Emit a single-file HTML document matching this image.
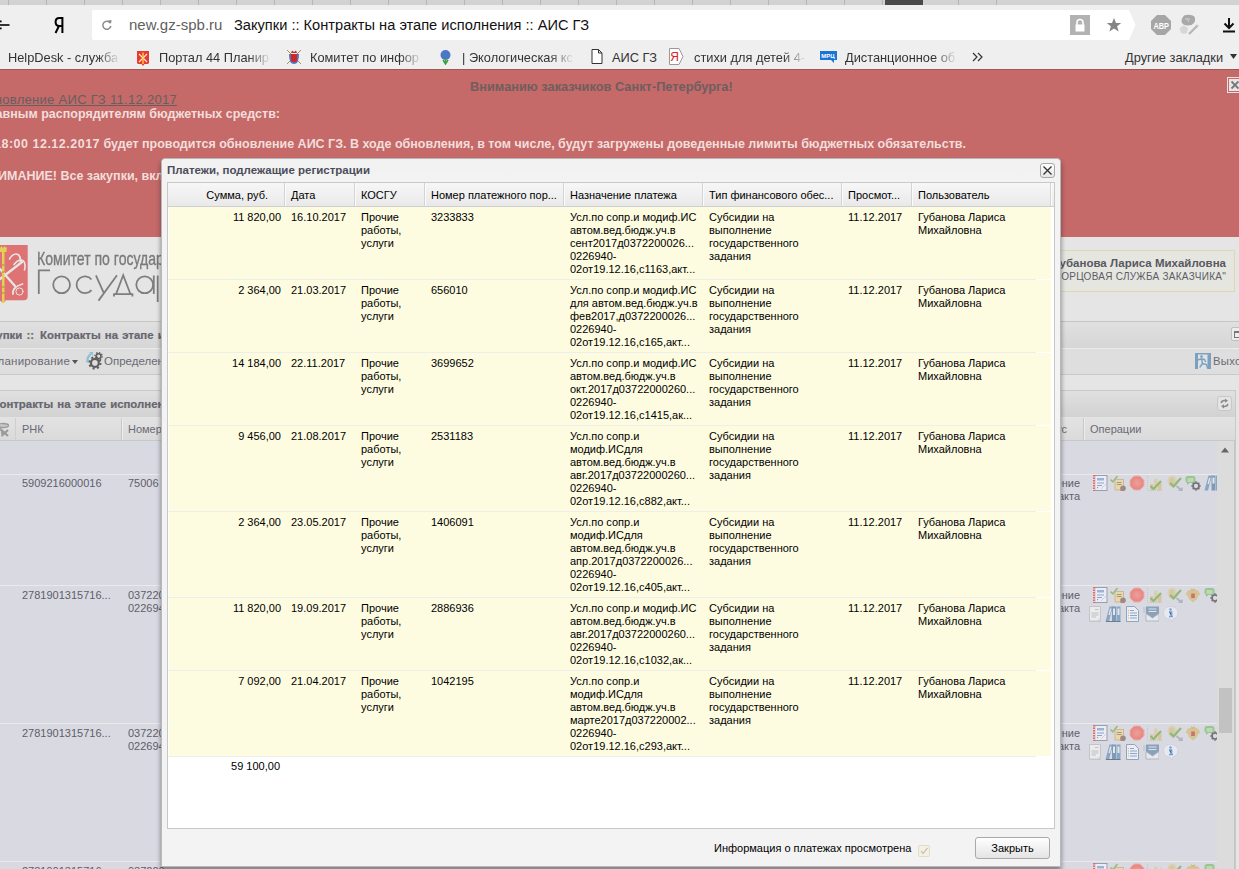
<!DOCTYPE html>
<html><head><meta charset="utf-8">
<style>
*{box-sizing:border-box}
html,body{margin:0;padding:0}
body{width:1239px;height:869px;overflow:hidden;position:relative;font-family:"Liberation Sans",sans-serif;background:#e5e5e5}
.a{position:absolute}
.nw{white-space:nowrap}
.bm{font-size:12.8px;line-height:16px;color:#333;top:50px}
.bt{font-size:12.5px;line-height:14px;font-weight:bold;color:#f3dedb}
.bgt{font-size:11px;line-height:13px;color:#5e5e68}
.hdt{font-size:11px;line-height:13px;color:#000}
.tb{font-size:11.4px;line-height:14px;font-weight:bold;color:#66666e;word-spacing:1px;-webkit-text-stroke:0.2px #66666e}
.cl{font-size:11px;line-height:13px;color:#000}
</style></head><body>
<svg width="0" height="0" style="position:absolute">
<defs>
<radialGradient id="gst" cx="0.5" cy="0.5" r="0.6"><stop offset="0" stop-color="#f58a7c"/><stop offset="0.7" stop-color="#ec6a60"/><stop offset="1" stop-color="#f0a8a0"/></radialGradient>
<g id="i1"><rect x="2.5" y="0.5" width="12.5" height="15" fill="#f6f6f8" stroke="#7a8aa0" stroke-width="1"/><rect x="1" y="0" width="2.2" height="16" fill="#d84848"/><path d="M0.5 2 H3 M0.5 4.5 H3 M0.5 7 H3 M0.5 9.5 H3 M0.5 12 H3 M0.5 14.5 H3" stroke="#f4f4f4" stroke-width="0.8"/><rect x="5" y="3" width="7" height="2.5" fill="#7ea6dc"/><path d="M5 8 H12 M5 10.5 H10" stroke="#6890cc" stroke-width="1"/><path d="M9 14 L14 9" stroke="#c0c4cc" stroke-width="0.8"/><rect x="5" y="12" width="1.2" height="1.2" fill="#6890cc"/></g>
<g id="i2"><path d="M0.5 4.5 L2.8 6.8 L7.5 1" stroke="#7cb45c" stroke-width="1.7" fill="none"/><rect x="5" y="4.5" width="8.5" height="10.5" fill="#ecd898" stroke="#c0a068" stroke-width="0.8"/><path d="M6.8 7.5 H11.5 M6.8 9.5 H11.5" stroke="#8a7050" stroke-width="0.9"/><circle cx="13" cy="13.2" r="2.8" fill="#8a6c5c"/><path d="M10 15.5 L11 16 L12 15.5" stroke="#c05050" stroke-width="0.8" fill="none"/></g>
<g id="i3"><path d="M5 0.8 H11 L15.2 5 V11 L11 15.2 H5 L0.8 11 V5 Z" fill="url(#gst)" stroke="#f0b0a8" stroke-width="0.8"/></g>
<g id="i4"><path d="M0.5 1 V15.5 H16" stroke="#b8b8b8" stroke-width="0.8" stroke-dasharray="1 1" fill="none"/><rect x="3" y="9" width="3.5" height="6.5" rx="1" fill="#d8c48c"/><rect x="7" y="3.5" width="3.5" height="12" rx="1" fill="#dccb98"/><rect x="11" y="7" width="3.5" height="8.5" rx="1" fill="#d4c088"/><path d="M3.5 11 L6.5 14 L14 6" stroke="#74ac54" stroke-width="2" fill="none"/></g>
<g id="i5"><ellipse cx="5.5" cy="6.5" rx="4.8" ry="6" fill="#dacea0" transform="rotate(-15 5.5 6.5)"/><ellipse cx="5" cy="6.5" rx="2.5" ry="4" fill="#cfc290" transform="rotate(-15 5 6.5)"/><path d="M3 8 L6.5 11.5 L14 3" stroke="#74ac54" stroke-width="2.2" fill="none"/><path d="M9.5 11 L14.5 15.5 M11.5 15.8 H14.8 V12.5" stroke="#a0a6ac" stroke-width="1.8" fill="none"/></g>
<g id="i6"><path d="M8 3 C5 2 1.5 3 0.8 8 C2.5 7.5 3 9.5 4 12 L8 15.5 L12 12 C13 9.5 13.5 7.5 15.2 8 C14.5 3 11 2 8 3 Z" fill="#d6bc78"/><rect x="6.2" y="6.5" width="3.6" height="4.5" fill="#c84a48"/><path d="M6 1 L8 2.5 L10 1 L9.5 3.5 H6.5 Z" fill="#caa858"/></g>
<g id="i7"><path d="M0.5 3.5 Q0.5 1 3 1 H8 Q10.5 1 10.5 3.5 V5.5 Q10.5 8 8 8 H4.5 L2 10 V7.8 Q0.5 7.5 0.5 5.5 Z" fill="#80c070"/><path d="M2.5 4 H8.5 M2.5 6 H8.5" stroke="#eef6e8" stroke-width="0.9"/><circle cx="11" cy="11" r="3" stroke="#4a4a4a" stroke-width="1.7" fill="none"/><path d="M11 6.3 V7.8 M11 14.2 V15.7 M6.3 11 H7.8 M14.2 11 H15.7 M7.7 7.7 L8.7 8.7 M13.3 13.3 L14.3 14.3 M7.7 14.3 L8.7 13.3 M13.3 8.7 L14.3 7.7" stroke="#4a4a4a" stroke-width="1.5"/></g>
<g id="i8"><path d="M0.5 15.5 L4.5 0.5 H8 L4 15.5 Z" fill="#6a94b8"/><rect x="7.5" y="0.5" width="4" height="15" fill="#5a84a8"/><rect x="12" y="0.5" width="4" height="15" fill="#6a94b8"/><path d="M5 3 L6.5 3 L5 9 L3.5 9 Z" fill="#e8ecf0"/><rect x="8.5" y="2.5" width="2" height="6" fill="#e8ecf0"/><rect x="13" y="2.5" width="2" height="6" fill="#e8ecf0"/></g>
<g id="i9"><path d="M0.5 0.5 H11.5 V15.5 H0.5 Z" fill="#f2f2f2" stroke="#bcbcbc"/><path d="M6 3.5 H9.5 M2.5 7 H9.5 M2.5 9 H9.5 M2.5 11 H7" stroke="#a8a8a8" stroke-width="0.8"/><rect x="1" y="14.5" width="11" height="1.5" fill="#c0c0c0"/><path d="M8 15 L11.5 11.5 V15 Z" fill="#d0d0d0"/></g>
<g id="i10"><path d="M0.5 15.5 L4.5 0.5 H8 L4 15.5 Z" fill="#6a94b8"/><rect x="7" y="0.5" width="4" height="15" fill="#5a84a8"/><rect x="11.5" y="0.5" width="4" height="15" fill="#6a94b8"/><path d="M5 2.5 L6.5 2.5 L5 9 L3.5 9 Z" fill="#e8ecf0"/><rect x="8" y="2.5" width="2" height="6.5" fill="#e8ecf0"/><rect x="12.5" y="2.5" width="2" height="6.5" fill="#e8ecf0"/><path d="M1 15.5 H15.5" stroke="#3e5a74" stroke-width="1"/></g>
<g id="i11"><path d="M0.5 0.5 H8.5 L12.5 4.5 V15.5 H0.5 Z" fill="#f6f6f8" stroke="#6e94b4"/><path d="M4 4.5 H8 M4 7 H11 M4 9.5 H11 M4 12 H11" stroke="#6e94c4" stroke-width="1"/><path d="M2 4.5 H3 M2 7 H3 M2 9.5 H3 M2 12 H3" stroke="#e0a050" stroke-width="1"/></g>
<g id="i12"><path d="M3 0.5 H16 V14 H3 Z" fill="#6e8eac"/><path d="M3 7.5 L9.5 12 L16 7.5 V15 H3 Z" fill="#eef0f2" stroke="#90a0a8" stroke-width="0.8"/><path d="M5.5 3 H13.5 M5.5 5.5 H13.5" stroke="#e0e8f0" stroke-width="1.1"/><path d="M0 2 H2.5 M0 4 H2.5 M0 6 H2.5" stroke="#a0b0c0" stroke-width="0.8"/></g>
<g id="i13"><path d="M7.5 0.5 C12 0.5 15 3 15 7 C15 10 13 12 10 13 L9 16 L7 13 C3 13 0.5 10.5 0.5 7 C0.5 3 3.5 0.5 7.5 0.5 Z" fill="#eeeef6" stroke="#c8c8d8" stroke-width="0.8"/><circle cx="7.5" cy="3.5" r="1.2" fill="#4a8ad0"/><path d="M6 6 H8.5 V10.5 M6 10.5 H10" stroke="#4a8ad0" stroke-width="1.7"/></g>
</defs></svg>

<!-- CHROME -->
<div class="a" style="left:0;top:0;width:1239px;height:5px;background:#d2d2d2"></div>
<div class="a" id="tabsep" style="left:0;top:0;width:1000px;height:5px;background:repeating-linear-gradient(90deg,transparent 0,transparent 8px,#b4b4b4 8px,#b4b4b4 9px,transparent 9px,transparent 38px);background-size:38px 5px"></div>
<div class="a" style="left:885px;top:0;width:38px;height:5px;background:#4a4a4a"></div>
<div class="a" style="left:0;top:5px;width:1239px;height:64px;background:#efefef"></div>
<!-- back arrow -->
<svg class="a" style="left:0;top:19px" width="12" height="12" viewBox="0 0 12 12"><path d="M0 6 H9.5" stroke="#000" stroke-width="1.6"/><path d="M-1 1 L-5 6 L-1 11" stroke="#000" stroke-width="1.6" fill="none"/><rect x="0" y="1.5" width="1.6" height="1.8" fill="#000"/><rect x="0" y="8.5" width="1.6" height="1.8" fill="#000"/></svg>
<!-- Ya -->
<svg class="a" style="left:54px;top:16px" width="11" height="18" viewBox="0 0 11 18"><rect x="7.4" y="1" width="2" height="16" fill="#000"/><path d="M8.5 2 H5.3 Q1.6 2 1.6 6 Q1.6 10 5.3 10 H8.5" stroke="#000" stroke-width="2" fill="none"/><path d="M5 10 L1.5 17" stroke="#000" stroke-width="2"/></svg>
<!-- address -->
<div class="a" style="left:92px;top:10px;width:1037px;height:30px;background:#fff;border-radius:2px 0 0 2px"></div>
<svg class="a" style="left:1128px;top:10px" width="8" height="30" viewBox="0 0 8 30"><path d="M0 0 L1 0 L7.5 15 L1 30 L0 30 Z" fill="#fff"/></svg>
<svg class="a" style="left:101px;top:19px" width="12" height="12" viewBox="0 0 12 12"><path d="M9.3 4.2 A4 4 0 1 0 9.8 7" stroke="#8a8a8a" stroke-width="1.5" fill="none"/><path d="M7 1.5 L10.5 1 L10 4.8 Z" fill="#8a8a8a"/></svg>
<div class="a nw" style="left:129px;top:16px;font-size:15px;line-height:18px;color:#5f5f5f">new.gz-spb.ru</div>
<div class="a nw" style="left:234px;top:16px;font-size:14.63px;line-height:18px;color:#111">Закупки :: Контракты на этапе исполнения :: АИС ГЗ</div>
<!-- lock -->
<div class="a" style="left:1070px;top:15px;width:20px;height:20px;background:#b2b2b2"></div>
<svg class="a" style="left:1070px;top:15px" width="20" height="20" viewBox="0 0 20 20"><path d="M7 10 V7.5 A3 3 0 0 1 13 7.5 V10" stroke="#fff" stroke-width="1.6" fill="none"/><rect x="5.5" y="9.5" width="9" height="7" fill="#fff"/></svg>
<!-- star -->
<svg class="a" style="left:1106px;top:17px" width="16" height="16" viewBox="0 0 16 16"><path d="M8 1 L10 6 L15.2 6.1 L11.1 9.3 L12.6 14.5 L8 11.5 L3.4 14.5 L4.9 9.3 L0.8 6.1 L6 6 Z" fill="#858585"/></svg>
<!-- ABP -->
<svg class="a" style="left:1151px;top:15px" width="20" height="20" viewBox="0 0 20 20"><path d="M6 0 H14 L20 6 V14 L14 20 H6 L0 14 V6 Z" fill="#a6a6a6"/><text x="2.5" y="14" font-family="Liberation Sans" font-weight="bold" font-size="9.5" fill="#fff" textLength="15.5" lengthAdjust="spacingAndGlyphs">ABP</text></svg>
<!-- extension 2 -->
<svg class="a" style="left:1178px;top:14px" width="24" height="22" viewBox="0 0 24 22"><path d="M5 3 Q6 0.8 10 0.8 Q16 0.8 17 4 Q17.5 7 16 9 Q14 11.5 10 11.5 Q5 11.5 3.5 8 Q3 5 5 3 Z" fill="#a9a9a9"/><path d="M7 5 H12 M9 5 L11 8" stroke="#d0d0d0" stroke-width="1"/><path d="M1.5 15 L5 11.5 Q8 12 10 14 L9 19 Q6 20.5 3 19 Z" fill="#d6d6d6"/><path d="M11 20 L20 11" stroke="#b8b8b8" stroke-width="2.4"/><path d="M19 10 L21 12" stroke="#e4e4e4" stroke-width="1.5"/></svg>
<!-- download -->
<svg class="a" style="left:1222px;top:17px" width="14" height="16" viewBox="0 0 14 16"><path d="M7 1 V10" stroke="#111" stroke-width="2"/><path d="M2.5 6.5 L7 11 L11.5 6.5" stroke="#111" stroke-width="2" fill="none"/><rect x="1" y="13.5" width="12" height="2" fill="#111"/></svg>
<!-- bookmarks -->
<div class="a nw bm" style="left:8px;width:112px;overflow:hidden;-webkit-mask-image:linear-gradient(90deg,#000 80%,transparent)">HelpDesk - служба</div>
<svg class="a" style="left:137px;top:51px" width="12" height="15" viewBox="0 0 12 15"><path d="M0 0 H12 V11.5 Q12 13 10 13 H7.5 L6 15 L4.5 13 H2 Q0 13 0 11.5 Z" fill="#e8392c"/><path d="M2 3 L10 11 M10 3 L2 11" stroke="#fbe8e0" stroke-width="1.2"/><path d="M6 1.5 V13" stroke="#f6d040" stroke-width="1.4"/></svg>
<div class="a nw bm" style="left:159px;width:112px;overflow:hidden;-webkit-mask-image:linear-gradient(90deg,#000 80%,transparent)">Портал 44 Планир</div>
<svg class="a" style="left:286px;top:49px" width="16" height="16" viewBox="0 0 16 16"><path d="M1 1 L15 15 M15 1 L1 15" stroke="#b09040" stroke-width="1"/><path d="M3 5 Q3 15 8 15 Q13 15 13 5 Z" fill="#4a78c0"/><path d="M5 5 H11 V11 Q11 13 8 13 Q5 13 5 11 Z" fill="#d02828"/><path d="M5 4 L6 1.5 L8 3 L10 1.5 L11 4 Z" fill="#c03030"/></svg>
<div class="a nw bm" style="left:310px;width:112px;overflow:hidden;-webkit-mask-image:linear-gradient(90deg,#000 80%,transparent)">Комитет по инфор</div>
<svg class="a" style="left:439px;top:49px" width="13" height="16" viewBox="0 0 13 16"><circle cx="6.5" cy="6" r="5" fill="#4a78c8"/><path d="M4 11 L6.5 15 L9 11 M6.5 9 V15" stroke="#3aa040" stroke-width="1.5" fill="none"/></svg>
<div class="a nw bm" style="left:462px;width:112px;overflow:hidden;-webkit-mask-image:linear-gradient(90deg,#000 78%,transparent)">| Экологическая кс</div>
<svg class="a" style="left:591px;top:49px" width="12" height="15" viewBox="0 0 12 15"><path d="M1 0.5 H7.5 L11 4 V14.5 H1 Z M7.5 0.5 V4 H11" stroke="#333" stroke-width="1" fill="#fff"/></svg>
<div class="a nw bm" style="left:612px">АИС ГЗ</div>
<svg class="a" style="left:669px;top:48px" width="15" height="17" viewBox="0 0 15 17"><path d="M0.5 0.5 H10 L14 8.5 L10 16.5 H0.5 Z" stroke="#999" stroke-width="1" fill="#fff"/><text x="5.5" y="13" font-family="Liberation Sans" font-size="12" fill="#d22" text-anchor="middle">Я</text></svg>
<div class="a nw bm" style="left:694px;width:112px;overflow:hidden;-webkit-mask-image:linear-gradient(90deg,#000 80%,transparent)">стихи для детей 4-5</div>
<svg class="a" style="left:820px;top:51px" width="17" height="12" viewBox="0 0 17 12"><path d="M0 0 H17 V9 H14 V12 L11 9 H0 Z" fill="#1a74d8"/><text x="8" y="7" font-family="Liberation Sans" font-weight="bold" font-size="6" fill="#fff" text-anchor="middle">МРЦ</text></svg>
<div class="a nw bm" style="left:845px;width:112px;overflow:hidden;-webkit-mask-image:linear-gradient(90deg,#000 80%,transparent)">Дистанционное об</div>
<svg class="a" style="left:972px;top:52px" width="11" height="10" viewBox="0 0 11 10"><path d="M1 1 L5 5 L1 9 M6 1 L10 5 L6 9" stroke="#333" stroke-width="1.2" fill="none"/></svg>
<div class="a nw bm" style="left:1125px">Другие закладки</div>
<svg class="a" style="left:1230px;top:54px" width="7" height="5" viewBox="0 0 7 5"><path d="M0 0 H7 L3.5 5 Z" fill="#333"/></svg>
<div class="a" style="left:0;top:69px;width:1239px;height:1px;background:#9c6060"></div>

<!-- PAGE BACKGROUND -->
<div class="a" style="left:0;top:70px;width:1239px;height:799px;background:#e5e5e5"></div>
<!-- banner -->
<div class="a" style="left:0;top:69px;width:1239px;height:1px;background:#a25656"></div>
<div class="a" style="left:0;top:70px;width:1239px;height:167px;background:#c56969"></div>
<div class="a nw" style="left:470px;top:80px;font-size:12.8px;line-height:14px;font-weight:bold;color:#6e5e5e">Вниманию заказчиков Санкт-Петербурга!</div>
<div class="a nw bt" style="right:1062px;top:93px;color:#656060;text-decoration:underline;font-weight:normal;font-size:13px;letter-spacing:0.3px">Обновление АИС ГЗ 11.12.2017</div>
<div class="a nw bt" style="right:959px;top:107px">Главным распорядителям бюджетных средств:</div>
<div class="a nw bt" style="right:273px;top:137px">В <span style="letter-spacing:.5px">18:00 12.12.2017</span> будет проводится обновление АИС ГЗ. В ходе обновления, в том числе, будут загружены доведенные лимиты бюджетных обязательств.</div>
<div class="a nw bt" style="left:-20px;top:169px">ВНИМАНИЕ! Все закупки, включая</div>
<div class="a" style="left:1227px;top:77px;width:14px;height:16px;border:1px solid #e4e4e4;background:#c56969"></div>
<div class="a" style="left:1229px;top:79px;width:12px;height:12px;background:#e6e6e6"></div>
<svg class="a" style="left:1230px;top:80px" width="10" height="10" viewBox="0 0 10 10"><path d="M1.5 1.5 L8.5 8.5 M8.5 1.5 L1.5 8.5" stroke="#777" stroke-width="1.8"/></svg>
<!-- header with logo -->
<svg class="a" style="left:0;top:245px" width="29" height="60" viewBox="0 0 29 60">
<path d="M0 0 H27.7 V51.5 Q27.7 55.2 24 55.2 H6 L3 58.3 L0 55.5 Z" fill="#df7272"/>
<g stroke="#e6e6e6" fill="none" stroke-linecap="round">
<path d="M0 34 L22 17" stroke-width="2.3"/>
<path d="M9.5 14 Q13.5 7.5 18 9.5 Q21 11.5 20.5 17" stroke-width="1.6"/>
<path d="M14 19.5 Q19 13 23.5 16 Q26 19 24.5 25" stroke-width="1.6"/>
<path d="M0 24 L15 41" stroke-width="2.3"/>
<path d="M13 49 Q12 42 22.5 39" stroke-width="1.8"/>
<circle cx="19.5" cy="46.5" r="3.6" stroke-width="1"/>
</g>
<rect x="2" y="7" width="2.5" height="51" fill="#e4d058"/>
<path d="M0 3 L1.5 1 L3 3 L4.5 1 L6 3 L7 1.5 L6.5 7 L0 7 Z" fill="#e4d058"/>
<path d="M2 20 H4.5 M2 27 H4.5 M2 42 H4.5 M2 48 H4.5" stroke="#8a8040" stroke-width="0.8"/>
</svg>
<div class="a nw" style="left:37px;top:249px;font-size:18.5px;line-height:20px;color:#7a7a7a;transform:scaleX(0.76);-webkit-text-stroke:0.35px #7a7a7a;transform-origin:0 0">Комитет по государственному заказу</div>
<svg class="a" style="left:37px;top:268px" width="130" height="36" viewBox="0 0 130 36" fill="none" stroke="#7e7e7e" stroke-width="1.8">
<path d="M1.8 26 V2.3 H13"/>
<circle cx="24.6" cy="16.8" r="8.4"/>
<path d="M54.5 11.5 A8.4 8.4 0 1 0 54.5 22.1"/>
<path d="M58.9 7.3 L67 25.3 M80 7.3 L61.5 32.6"/>
<path d="M76.2 26.2 H96.2 M77 26 V28.5 M95.4 26 V28.5 M79 26.2 L86.2 7.3 L93.5 26.2"/>
<circle cx="107.7" cy="16.8" r="8.4"/><path d="M116.8 7.5 V26"/>
<path d="M120.7 7.5 V34"/></svg>
<!-- user box -->
<div class="a" style="left:1040px;top:250px;width:195px;height:42px;background:#e6e6e1;border:1px solid #ded8b0"></div>
<div class="a nw" style="right:13px;top:256px;font-size:11.5px;line-height:14px;font-weight:bold;color:#585860">Губанова Лариса Михайловна</div>
<div class="a nw" style="right:13px;top:270px;font-size:10px;line-height:14px;color:#5c5c64;letter-spacing:0.27px">"ДИРЕКЦИЯ ГИБДД ДВОРЦОВАЯ СЛУЖБА ЗАКАЗЧИКА"</div>
<!-- title bar 1 -->
<div class="a" style="left:0;top:321px;width:1239px;height:1px;background:#c6c6c6"></div>
<div class="a" style="left:0;top:322px;width:1239px;height:26px;background:linear-gradient(#e0e0e0,#d6d6d6)"></div>
<div class="a nw tb" style="right:1205px;top:328px;transform-origin:100% 0">Закупки ::</div><div class="a nw tb" style="left:40px;top:328px">Контракты на этапе исполнения</div>
<div class="a" style="left:1231px;top:327px;width:12px;height:14px;border:1px solid #c0c0c0;border-radius:2px;background:#ececec"></div>
<div class="a" style="left:1234px;top:331px;width:9px;height:7px;border:1px solid #777;border-top-width:2px"></div>
<!-- toolbar -->
<div class="a" style="left:0;top:348px;width:1239px;height:1px;background:#ececec"></div>
<div class="a" style="left:0;top:349px;width:1239px;height:25px;background:#dedede"></div>
<div class="a" style="left:0;top:374px;width:1239px;height:1px;background:#c9c9c9"></div>
<div class="a nw" style="right:1169px;top:355px;font-size:11.5px;line-height:13px;color:#6a6a74;letter-spacing:.2px">Планирование</div>
<svg class="a" style="left:72px;top:360px" width="6" height="4" viewBox="0 0 6 4"><path d="M0 0 H6 L3 4 Z" fill="#555"/></svg>
<svg class="a" style="left:84px;top:351px" width="20" height="20" viewBox="0 0 20 20"><path d="M3.2 11.5 Q3.2 5.5 6.8 3" stroke="#8ec0dc" stroke-width="2.2" fill="none"/><path d="M5.2 1 H9 V5 Z" fill="#8ec0dc"/>
<circle cx="10.9" cy="11.9" r="3.9" stroke="#5e5e5e" stroke-width="2.2" fill="none"/><circle cx="10.9" cy="11.9" r="5.6" stroke="#5e5e5e" stroke-width="2" stroke-dasharray="2.1 2.3" fill="none"/>
<circle cx="14.6" cy="5.2" r="2.4" stroke="#5e5e5e" stroke-width="1.5" fill="none"/><circle cx="14.6" cy="5.2" r="3.6" stroke="#5e5e5e" stroke-width="1.4" stroke-dasharray="1.4 1.4" fill="none"/></svg>
<div class="a nw" style="left:104px;top:355px;font-size:11.5px;line-height:13px;color:#6a6a74">Определение поставщика</div>
<svg class="a" style="left:1195px;top:353px" width="17" height="17" viewBox="0 0 17 17"><rect x="0" y="0" width="16" height="16" fill="#7ba0c0"/><rect x="3" y="1.5" width="11" height="14.5" fill="#dfe3e6"/><rect x="12.5" y="1.5" width="1.5" height="14.5" fill="#7ba0c0"/><circle cx="6.5" cy="3.6" r="1.3" fill="#7ba0c0"/><path d="M2.5 7 L6 6 L9.5 6.5 L10.5 8.5 M6.5 5.5 L7.5 10.5 M7.5 10.5 L5 14 M7.5 10.5 L11.5 11.5 L12.5 15" stroke="#7ba0c0" stroke-width="1.4" fill="none" stroke-linecap="round"/></svg>
<div class="a nw" style="left:1213px;top:355px;font-size:11.3px;line-height:13px;color:#6a6a74;letter-spacing:.3px">Выход</div>
<!-- grid panel -->
<div class="a" style="left:0;top:390px;width:1236px;height:1px;background:#c9c9c9"></div>
<div class="a" style="left:1235px;top:390px;width:1px;height:479px;background:#c9c9c9"></div>
<div class="a" style="left:0;top:391px;width:1235px;height:26px;background:linear-gradient(#e0e0e0,#d2d2d2)"></div>
<div class="a nw tb" style="left:-7.5px;top:397px">Контракты на этапе исполнения</div>
<div class="a" style="left:1217px;top:396px;width:15px;height:15px;border:1px solid #c8c8c8;border-radius:3px;background:#e4e4e4"></div>
<svg class="a" style="left:1219px;top:398px" width="11" height="11" viewBox="0 0 11 11"><path d="M2.2 5.2 Q2.5 2.3 6.5 2.6" stroke="#8a8a8a" stroke-width="1.5" fill="none"/><path d="M6 0.6 L9 2.8 L6 4.8 Z" fill="#8a8a8a"/><path d="M8.8 5.8 Q8.5 8.7 4.5 8.4" stroke="#8a8a8a" stroke-width="1.5" fill="none"/><path d="M5 6.2 L2 8.2 L5 10.4 Z" fill="#8a8a8a"/></svg>
<!-- grid header -->
<div class="a" style="left:0;top:417px;width:1235px;height:23px;background:linear-gradient(#e3e3e3,#dadada)"></div>
<div class="a" style="left:0;top:440px;width:1235px;height:1px;background:#c8c8c8"></div>
<div class="a" style="left:15px;top:418px;width:1px;height:22px;background:#cfcfcf"></div>
<div class="a" style="left:121px;top:418px;width:1px;height:22px;background:#c8c8c8"></div><div class="a" style="left:122px;top:418px;width:1px;height:22px;background:#ececec"></div>
<div class="a" style="left:1083px;top:418px;width:1px;height:22px;background:#c8c8c8"></div><div class="a" style="left:1084px;top:418px;width:1px;height:22px;background:#ececec"></div>
<svg class="a" style="left:0;top:421px" width="10" height="16" viewBox="0 0 10 16"><ellipse cx="3" cy="4.5" rx="5.5" ry="2" stroke="#9a9a9a" stroke-width="1.3" fill="#c8c8c8"/><path d="M-2 5.5 L2 10 V13" stroke="#a0a0a0" stroke-width="2" fill="none"/><path d="M1.5 9 L8 15 M8 9 L1.5 15" stroke="#9a9a9a" stroke-width="2.2"/></svg>
<div class="a nw" style="left:22px;top:423px;font-size:11px;line-height:13px;color:#6a6a74">РНК</div>
<div class="a nw" style="left:128px;top:423px;font-size:11px;line-height:13px;color:#6a6a74">Номер</div>
<div class="a nw" style="right:172px;top:423px;font-size:11px;line-height:13px;color:#6a6a74">Статус</div>
<div class="a nw" style="left:1090px;top:423px;font-size:11px;line-height:13px;color:#6a6a74">Операции</div>
<!-- grid body -->
<div class="a" style="left:0;top:441px;width:1217px;height:428px;background:#d9d9e2"></div>
<div class="a" style="left:1217px;top:441px;width:18px;height:428px;background:#dcdcdc"></div>
<div class="a" style="left:1234px;top:441px;width:1px;height:428px;background:#c4c4c4"></div>
<svg class="a" style="left:1220px;top:446px" width="10" height="8" viewBox="0 0 10 8"><path d="M1 6.5 L5 1.5 L9 6.5 Z" fill="#666"/></svg>
<div class="a" style="left:1219px;top:688px;width:13px;height:45px;background:#c2c2c2"></div>
<div class="a" style="left:0;top:474px;width:1217px;height:1px;background:#eaeaea"></div>
<div class="a" style="left:0;top:585px;width:1217px;height:1px;background:#eaeaea"></div>
<div class="a" style="left:0;top:723px;width:1217px;height:1px;background:#eaeaea"></div>
<div class="a" style="left:0;top:861px;width:1217px;height:1px;background:#eaeaea"></div>
<div class="bgt a nw" style="left:22px;top:477px">5909216000016</div>
<div class="bgt a nw" style="left:128px;top:477px">75006</div>
<div class="bgt a nw" style="left:22px;top:589px">2781901315716...</div>
<div class="bgt a nw" style="left:128px;top:589px">037220<br>022694</div>
<div class="bgt a nw" style="left:22px;top:727px">2781901315716...</div>
<div class="bgt a nw" style="left:128px;top:727px">037220<br>022694</div>
<div class="bgt a nw" style="left:22px;top:865px">2781901315716...</div>
<div class="bgt a nw" style="left:128px;top:865px">037220</div>
<div class="bgt a nw" style="right:159px;top:477px;text-align:right">Исполнение<br>контракта</div>
<div class="bgt a nw" style="right:159px;top:589px;text-align:right">Исполнение<br>контракта</div>
<div class="bgt a nw" style="right:159px;top:727px;text-align:right">Исполнение<br>контракта</div>

<svg class="a" style="left:1092px;top:475px;opacity:.72" width="16" height="16" viewBox="0 0 16 16"><use href="#i1"/></svg>
<svg class="a" style="left:1110px;top:475px;opacity:.72" width="16" height="16" viewBox="0 0 16 16"><use href="#i2"/></svg>
<svg class="a" style="left:1129px;top:475px;opacity:.72" width="16" height="16" viewBox="0 0 16 16"><use href="#i3"/></svg>
<svg class="a" style="left:1147px;top:475px;opacity:.72" width="16" height="16" viewBox="0 0 16 16"><use href="#i4"/></svg>
<svg class="a" style="left:1167px;top:475px;opacity:.72" width="16" height="16" viewBox="0 0 16 16"><use href="#i5"/></svg>
<svg class="a" style="left:1185px;top:475px;opacity:.72" width="16" height="16" viewBox="0 0 16 16"><use href="#i7"/></svg>
<svg class="a" style="left:1204px;top:475px;opacity:.72" width="13" height="16" viewBox="0 0 13 16"><use href="#i8"/></svg>
<svg class="a" style="left:1092px;top:587px;opacity:.72" width="16" height="16" viewBox="0 0 16 16"><use href="#i1"/></svg>
<svg class="a" style="left:1110px;top:587px;opacity:.72" width="16" height="16" viewBox="0 0 16 16"><use href="#i2"/></svg>
<svg class="a" style="left:1129px;top:587px;opacity:.72" width="16" height="16" viewBox="0 0 16 16"><use href="#i3"/></svg>
<svg class="a" style="left:1147px;top:587px;opacity:.72" width="16" height="16" viewBox="0 0 16 16"><use href="#i4"/></svg>
<svg class="a" style="left:1167px;top:587px;opacity:.72" width="16" height="16" viewBox="0 0 16 16"><use href="#i5"/></svg>
<svg class="a" style="left:1185px;top:587px;opacity:.72" width="16" height="16" viewBox="0 0 16 16"><use href="#i6"/></svg>
<svg class="a" style="left:1204px;top:587px;opacity:.72" width="13" height="16" viewBox="0 0 13 16"><use href="#i7"/></svg>
<svg class="a" style="left:1089px;top:606px;opacity:.72" width="16" height="16" viewBox="0 0 16 16"><use href="#i9"/></svg>
<svg class="a" style="left:1105px;top:606px;opacity:.72" width="16" height="16" viewBox="0 0 16 16"><use href="#i10"/></svg>
<svg class="a" style="left:1126px;top:606px;opacity:.72" width="16" height="16" viewBox="0 0 16 16"><use href="#i11"/></svg>
<svg class="a" style="left:1143px;top:606px;opacity:.72" width="16" height="16" viewBox="0 0 16 16"><use href="#i12"/></svg>
<svg class="a" style="left:1163px;top:606px;opacity:.72" width="16" height="16" viewBox="0 0 16 16"><use href="#i13"/></svg>
<svg class="a" style="left:1092px;top:725px;opacity:.72" width="16" height="16" viewBox="0 0 16 16"><use href="#i1"/></svg>
<svg class="a" style="left:1110px;top:725px;opacity:.72" width="16" height="16" viewBox="0 0 16 16"><use href="#i2"/></svg>
<svg class="a" style="left:1129px;top:725px;opacity:.72" width="16" height="16" viewBox="0 0 16 16"><use href="#i3"/></svg>
<svg class="a" style="left:1147px;top:725px;opacity:.72" width="16" height="16" viewBox="0 0 16 16"><use href="#i4"/></svg>
<svg class="a" style="left:1167px;top:725px;opacity:.72" width="16" height="16" viewBox="0 0 16 16"><use href="#i5"/></svg>
<svg class="a" style="left:1185px;top:725px;opacity:.72" width="16" height="16" viewBox="0 0 16 16"><use href="#i6"/></svg>
<svg class="a" style="left:1204px;top:725px;opacity:.72" width="13" height="16" viewBox="0 0 13 16"><use href="#i7"/></svg>
<svg class="a" style="left:1089px;top:744px;opacity:.72" width="16" height="16" viewBox="0 0 16 16"><use href="#i9"/></svg>
<svg class="a" style="left:1105px;top:744px;opacity:.72" width="16" height="16" viewBox="0 0 16 16"><use href="#i10"/></svg>
<svg class="a" style="left:1126px;top:744px;opacity:.72" width="16" height="16" viewBox="0 0 16 16"><use href="#i11"/></svg>
<svg class="a" style="left:1143px;top:744px;opacity:.72" width="16" height="16" viewBox="0 0 16 16"><use href="#i12"/></svg>
<svg class="a" style="left:1163px;top:744px;opacity:.72" width="16" height="16" viewBox="0 0 16 16"><use href="#i13"/></svg>
<svg class="a" style="left:1092px;top:863px;opacity:.72" width="16" height="16" viewBox="0 0 16 16"><use href="#i1"/></svg>
<svg class="a" style="left:1110px;top:863px;opacity:.72" width="16" height="16" viewBox="0 0 16 16"><use href="#i2"/></svg>
<svg class="a" style="left:1129px;top:863px;opacity:.72" width="16" height="16" viewBox="0 0 16 16"><use href="#i3"/></svg>
<svg class="a" style="left:1147px;top:863px;opacity:.72" width="16" height="16" viewBox="0 0 16 16"><use href="#i4"/></svg>
<svg class="a" style="left:1167px;top:863px;opacity:.72" width="16" height="16" viewBox="0 0 16 16"><use href="#i5"/></svg>
<svg class="a" style="left:1185px;top:863px;opacity:.72" width="16" height="16" viewBox="0 0 16 16"><use href="#i6"/></svg>
<svg class="a" style="left:1204px;top:863px;opacity:.72" width="13" height="16" viewBox="0 0 13 16"><use href="#i7"/></svg>
<div class="a" id="modal" style="left:161px;top:158px;width:900px;height:709px;background:#f3f3f3;border:1px solid #b8b8b8;border-radius:4px 4px 0 0;box-shadow:-1px 4px 4px rgba(40,40,50,.28),1px 4px 4px rgba(40,40,50,.28)"></div>
<div class="a" style="left:162px;top:159px;width:898px;height:22px;background:linear-gradient(#f1f1f1,#f3f3f3);border-radius:4px 4px 0 0"></div>
<div class="a nw" style="left:167px;top:163px;font-size:11.5px;line-height:14px;font-weight:bold;color:#4c4c58">Платежи, подлежащие регистрации</div>
<div class="a" style="left:1040px;top:163px;width:15px;height:15px;border:1px solid #a8a8a8;border-radius:3px;background:linear-gradient(#fff,#e6e6e6)"></div>
<svg class="a" style="left:1040px;top:163px" width="15" height="15" viewBox="0 0 15 15"><path d="M3.5 3.5 L11.5 11.5 M11.5 3.5 L3.5 11.5" stroke="#333" stroke-width="1.3"/></svg>
<div class="a" style="left:167px;top:182px;width:888px;height:647px;background:#fff;border:1px solid #c8c8c8"></div>
<div class="a" style="left:168px;top:183px;width:886px;height:23px;background:linear-gradient(#f7f7f7,#e9e9e9)"></div>
<div class="a" style="left:168px;top:206px;width:886px;height:1px;background:#cfcfcf"></div>
<div class="a" style="left:284px;top:183px;width:1px;height:23px;background:#d4d4d4"></div>
<div class="a" style="left:285px;top:183px;width:1px;height:23px;background:#fbfbfb"></div>
<div class="a" style="left:354px;top:183px;width:1px;height:23px;background:#d4d4d4"></div>
<div class="a" style="left:355px;top:183px;width:1px;height:23px;background:#fbfbfb"></div>
<div class="a" style="left:424px;top:183px;width:1px;height:23px;background:#d4d4d4"></div>
<div class="a" style="left:425px;top:183px;width:1px;height:23px;background:#fbfbfb"></div>
<div class="a" style="left:563px;top:183px;width:1px;height:23px;background:#d4d4d4"></div>
<div class="a" style="left:564px;top:183px;width:1px;height:23px;background:#fbfbfb"></div>
<div class="a" style="left:702px;top:183px;width:1px;height:23px;background:#d4d4d4"></div>
<div class="a" style="left:703px;top:183px;width:1px;height:23px;background:#fbfbfb"></div>
<div class="a" style="left:841px;top:183px;width:1px;height:23px;background:#d4d4d4"></div>
<div class="a" style="left:842px;top:183px;width:1px;height:23px;background:#fbfbfb"></div>
<div class="a" style="left:911px;top:183px;width:1px;height:23px;background:#d4d4d4"></div>
<div class="a" style="left:912px;top:183px;width:1px;height:23px;background:#fbfbfb"></div>
<div class="a" style="left:1050px;top:183px;width:1px;height:23px;background:#d4d4d4"></div>
<div class="a" style="left:1051px;top:183px;width:1px;height:23px;background:#fbfbfb"></div>
<div class="a nw hdt" style="right:971px;top:189px">Сумма, руб.</div>
<div class="a nw hdt" style="left:291px;top:189px">Дата</div>
<div class="a nw hdt" style="left:361px;top:189px">КОСГУ</div>
<div class="a nw hdt" style="left:431px;top:189px">Номер платежного пор...</div>
<div class="a nw hdt" style="left:570px;top:189px">Назначение платежа</div>
<div class="a nw hdt" style="left:709px;top:189px">Тип финансового обес...</div>
<div class="a nw hdt" style="left:848px;top:189px">Просмот...</div>
<div class="a nw hdt" style="left:918px;top:189px">Пользователь</div>
<div class="a" style="left:169px;top:207px;width:882px;height:72px;background:#fdfbe0"></div>
<div class="a" style="left:168px;top:279px;width:868px;height:1px;background:#eeeeea"></div>
<div class="a nw cl" style="right:958px;top:211px;text-align:right">11 820,00</div>
<div class="a nw cl" style="left:291px;top:211px">16.10.2017</div>
<div class="a nw cl" style="left:361px;top:211px">Прочие<br>работы,<br>услуги</div>
<div class="a nw cl" style="left:431px;top:211px">3233833</div>
<div class="a nw cl" style="left:570px;top:211px">Усл.по сопр.и модиф.ИС<br>автом.вед.бюдж.уч.в<br>сент2017д0372200026...<br>0226940-<br>02от19.12.16,с1163,акт...</div>
<div class="a nw cl" style="left:709px;top:211px">Субсидии на<br>выполнение<br>государственного<br>задания</div>
<div class="a nw cl" style="left:848px;top:211px">11.12.2017</div>
<div class="a nw cl" style="left:918px;top:211px">Губанова Лариса<br>Михайловна</div>
<div class="a" style="left:169px;top:280px;width:882px;height:72px;background:#fdfbe0"></div>
<div class="a" style="left:168px;top:352px;width:868px;height:1px;background:#eeeeea"></div>
<div class="a nw cl" style="right:958px;top:284px;text-align:right">2 364,00</div>
<div class="a nw cl" style="left:291px;top:284px">21.03.2017</div>
<div class="a nw cl" style="left:361px;top:284px">Прочие<br>работы,<br>услуги</div>
<div class="a nw cl" style="left:431px;top:284px">656010</div>
<div class="a nw cl" style="left:570px;top:284px">Усл.по сопр.и модиф.ИС<br>для автом.вед.бюдж.уч.в<br>фев2017,д0372200026...<br>0226940-<br>02от19.12.16,с165,акт...</div>
<div class="a nw cl" style="left:709px;top:284px">Субсидии на<br>выполнение<br>государственного<br>задания</div>
<div class="a nw cl" style="left:848px;top:284px">11.12.2017</div>
<div class="a nw cl" style="left:918px;top:284px">Губанова Лариса<br>Михайловна</div>
<div class="a" style="left:169px;top:353px;width:882px;height:72px;background:#fdfbe0"></div>
<div class="a" style="left:168px;top:425px;width:868px;height:1px;background:#eeeeea"></div>
<div class="a nw cl" style="right:958px;top:357px;text-align:right">14 184,00</div>
<div class="a nw cl" style="left:291px;top:357px">22.11.2017</div>
<div class="a nw cl" style="left:361px;top:357px">Прочие<br>работы,<br>услуги</div>
<div class="a nw cl" style="left:431px;top:357px">3699652</div>
<div class="a nw cl" style="left:570px;top:357px">Усл.по сопр.и модиф.ИС<br>автом.вед.бюдж.уч.в<br>окт.2017д03722000260...<br>0226940-<br>02от19.12.16,с1415,ак...</div>
<div class="a nw cl" style="left:709px;top:357px">Субсидии на<br>выполнение<br>государственного<br>задания</div>
<div class="a nw cl" style="left:848px;top:357px">11.12.2017</div>
<div class="a nw cl" style="left:918px;top:357px">Губанова Лариса<br>Михайловна</div>
<div class="a" style="left:169px;top:426px;width:882px;height:85px;background:#fdfbe0"></div>
<div class="a" style="left:168px;top:511px;width:868px;height:1px;background:#eeeeea"></div>
<div class="a nw cl" style="right:958px;top:430px;text-align:right">9 456,00</div>
<div class="a nw cl" style="left:291px;top:430px">21.08.2017</div>
<div class="a nw cl" style="left:361px;top:430px">Прочие<br>работы,<br>услуги</div>
<div class="a nw cl" style="left:431px;top:430px">2531183</div>
<div class="a nw cl" style="left:570px;top:430px">Усл.по сопр.и<br>модиф.ИСдля<br>автом.вед.бюдж.уч.в<br>авг.2017д03722000260...<br>0226940-<br>02от19.12.16,с882,акт...</div>
<div class="a nw cl" style="left:709px;top:430px">Субсидии на<br>выполнение<br>государственного<br>задания</div>
<div class="a nw cl" style="left:848px;top:430px">11.12.2017</div>
<div class="a nw cl" style="left:918px;top:430px">Губанова Лариса<br>Михайловна</div>
<div class="a" style="left:169px;top:512px;width:882px;height:85px;background:#fdfbe0"></div>
<div class="a" style="left:168px;top:597px;width:868px;height:1px;background:#eeeeea"></div>
<div class="a nw cl" style="right:958px;top:516px;text-align:right">2 364,00</div>
<div class="a nw cl" style="left:291px;top:516px">23.05.2017</div>
<div class="a nw cl" style="left:361px;top:516px">Прочие<br>работы,<br>услуги</div>
<div class="a nw cl" style="left:431px;top:516px">1406091</div>
<div class="a nw cl" style="left:570px;top:516px">Усл.по сопр.и<br>модиф.ИСдля<br>автом.вед.бюдж.уч.в<br>апр.2017д0372200026...<br>0226940-<br>02от19.12.16,с405,акт...</div>
<div class="a nw cl" style="left:709px;top:516px">Субсидии на<br>выполнение<br>государственного<br>задания</div>
<div class="a nw cl" style="left:848px;top:516px">11.12.2017</div>
<div class="a nw cl" style="left:918px;top:516px">Губанова Лариса<br>Михайловна</div>
<div class="a" style="left:169px;top:598px;width:882px;height:72px;background:#fdfbe0"></div>
<div class="a" style="left:168px;top:670px;width:868px;height:1px;background:#eeeeea"></div>
<div class="a nw cl" style="right:958px;top:602px;text-align:right">11 820,00</div>
<div class="a nw cl" style="left:291px;top:602px">19.09.2017</div>
<div class="a nw cl" style="left:361px;top:602px">Прочие<br>работы,<br>услуги</div>
<div class="a nw cl" style="left:431px;top:602px">2886936</div>
<div class="a nw cl" style="left:570px;top:602px">Усл.по сопр.и модиф.ИС<br>автом.вед.бюдж.уч.в<br>авг.2017д03722000260...<br>0226940-<br>02от19.12.16,с1032,ак...</div>
<div class="a nw cl" style="left:709px;top:602px">Субсидии на<br>выполнение<br>государственного<br>задания</div>
<div class="a nw cl" style="left:848px;top:602px">11.12.2017</div>
<div class="a nw cl" style="left:918px;top:602px">Губанова Лариса<br>Михайловна</div>
<div class="a" style="left:169px;top:671px;width:882px;height:85px;background:#fdfbe0"></div>
<div class="a" style="left:168px;top:756px;width:868px;height:1px;background:#eeeeea"></div>
<div class="a nw cl" style="right:958px;top:675px;text-align:right">7 092,00</div>
<div class="a nw cl" style="left:291px;top:675px">21.04.2017</div>
<div class="a nw cl" style="left:361px;top:675px">Прочие<br>работы,<br>услуги</div>
<div class="a nw cl" style="left:431px;top:675px">1042195</div>
<div class="a nw cl" style="left:570px;top:675px">Усл.по сопр.и<br>модиф.ИСдля<br>автом.вед.бюдж.уч.в<br>марте2017д037220002...<br>0226940-<br>02от19.12.16,с293,акт...</div>
<div class="a nw cl" style="left:709px;top:675px">Субсидии на<br>выполнение<br>государственного<br>задания</div>
<div class="a nw cl" style="left:848px;top:675px">11.12.2017</div>
<div class="a nw cl" style="left:918px;top:675px">Губанова Лариса<br>Михайловна</div>
<div class="a nw cl" style="right:959px;top:760px;text-align:right">59 100,00</div>
<div class="a nw" style="left:714px;top:842px;font-size:11px;line-height:13px;color:#000">Информация о платежах просмотрена</div>
<div class="a" style="left:918px;top:845px;width:12px;height:12px;border:1px solid #e2dcc8;border-radius:2px;background:#f4f0e4"></div>
<svg class="a" style="left:918px;top:845px" width="12" height="12" viewBox="0 0 12 12"><path d="M3 6 L5 8.5 L9.5 3" stroke="#c8c4b8" stroke-width="1.3" fill="none"/></svg>
<div class="a" style="left:975px;top:837px;width:75px;height:22px;border:1px solid #a9a9a9;border-radius:3px;background:linear-gradient(#ffffff,#e4e4e4)"></div>
<div class="a nw" style="left:975px;top:842px;width:75px;text-align:center;font-size:11px;line-height:13px;color:#000">Закрыть</div>
</body></html>
